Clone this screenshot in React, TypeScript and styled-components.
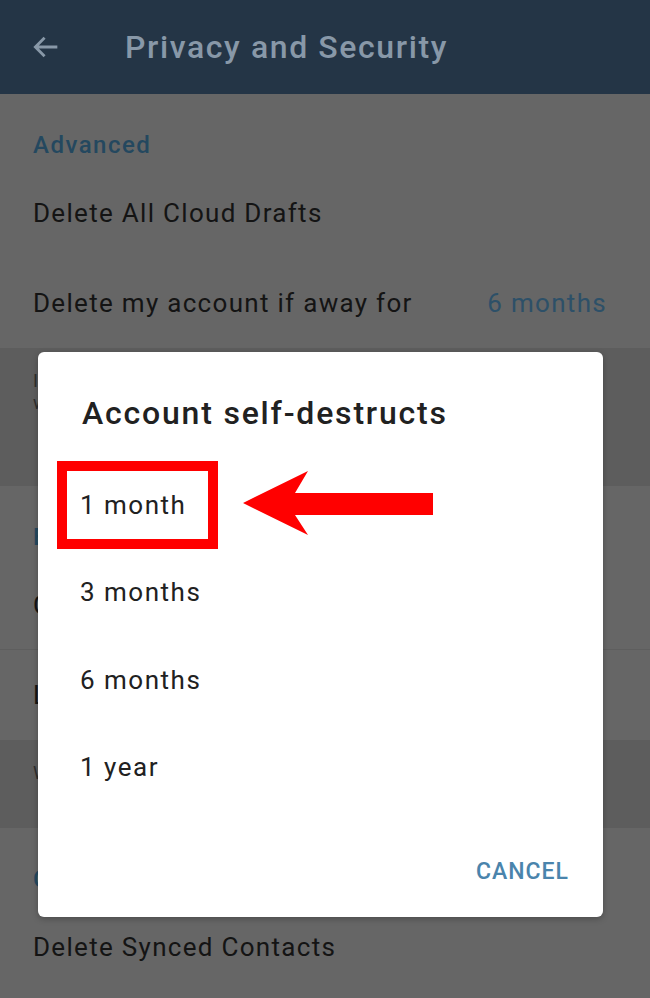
import styled, { createGlobalStyle } from "styled-components";

const GlobalStyle = createGlobalStyle`
  html, body {
    margin: 0;
    padding: 0;
    background: #666666;
  }
  * {
    box-sizing: border-box;
  }
`;

const Screen = styled.div`
  position: relative;
  width: 650px;
  height: 998px;
  overflow: hidden;
  background: #666666;
  font-family: Roboto, "Liberation Sans", sans-serif;
`;

const AppBar = styled.header`
  display: flex;
  align-items: center;
  height: 94px;
  padding-left: 29px;
  background: #243546;
`;

const BackButton = styled.div`
  display: flex;
  width: 34px;
  height: 34px;
  color: #8898a8;
`;

const AppTitle = styled.h1`
  margin: 0 0 0 62px;
  font-size: 32px;
  font-weight: 500;
  color: #8898a8;
  letter-spacing: 1.6px;
`;

const SectionHeader = styled.div`
  height: 74px;
  padding: 37px 33px 0;
  font-size: 24px;
  line-height: 28px;
  font-weight: 500;
  color: #24485f;
  letter-spacing: 1.5px;
`;

const Row = styled.div<{ $divider?: boolean }>`
  display: flex;
  align-items: center;
  justify-content: space-between;
  height: 90px;
  padding: 0 43px 0 33px;
  font-size: 26px;
  letter-spacing: 1.3px;
  color: #141414;
  border-bottom: ${(p) => (p.$divider ? "1px solid #5e5e5e" : "none")};
`;

const RowValue = styled.span`
  color: #2d5068;
`;

const InfoBand = styled.div<{ $height: number }>`
  height: ${(p) => p.$height}px;
  padding: 22px 33px 0;
  background: #5d5d5d;
  font-size: 18px;
  line-height: 22px;
  color: #2e2e2e;
`;

const Dialog = styled.div`
  position: absolute;
  left: 38px;
  top: 352px;
  width: 565px;
  height: 565px;
  display: flex;
  flex-direction: column;
  padding: 40px 34px 22px 0;
  background: #ffffff;
  border-radius: 6px;
  box-shadow: 0 2px 6px rgba(0, 0, 0, 0.25);
`;

const DialogTitle = styled.h2`
  margin: 0 0 27px 44px;
  font-size: 32px;
  line-height: 42px;
  font-weight: 500;
  letter-spacing: 1.8px;
  color: #212121;
`;

const OptionList = styled.div`
  display: flex;
  flex-direction: column;
`;

const Option = styled.div`
  display: flex;
  align-items: center;
  height: 87.5px;
  padding-left: 42px;
  font-size: 26px;
  letter-spacing: 1.5px;
  color: #212121;
`;

const Highlight = styled.span`
  display: inline-flex;
  align-items: center;
  height: 88px;
  margin-left: -23px;
  padding: 0 22px 0 13px;
  border: 10px solid #ff0000;
`;

const Pointer = styled.svg`
  flex: none;
  margin-left: 25px;
  margin-top: -4px;
`;

const DialogFooter = styled.div`
  display: flex;
  justify-content: flex-end;
  align-items: center;
  height: 48px;
  margin-top: auto;
`;

const CancelButton = styled.span`
  font-size: 23px;
  font-weight: 500;
  color: #4a84ac;
  letter-spacing: 1px;
`;

const options = ["1 month", "3 months", "6 months", "1 year"];

export default function App() {
  return (
    <Screen>
      <GlobalStyle />
      <AppBar>
        <BackButton>
          <svg width="34" height="34" viewBox="0 0 24 24" fill="none" stroke="currentColor" strokeWidth="2">
            <path d="M20 12H4.5M11 5.5L4.5 12l6.5 6.5" />
          </svg>
        </BackButton>
        <AppTitle>Privacy and Security</AppTitle>
      </AppBar>

      <SectionHeader>Advanced</SectionHeader>
      <Row>Delete All Cloud Drafts</Row>
      <Row>
        Delete my account if away for
        <RowValue>6 months</RowValue>
      </Row>
      <InfoBand $height={138}>
        If you do not come online at least once within this period, your account will be
        deleted along with all messages and contacts.
      </InfoBand>

      <SectionHeader>Bots and websites</SectionHeader>
      <Row $divider>Clear Payment and Shipping Info</Row>
      <Row>Logged In with Telegram</Row>
      <InfoBand $height={88}>Websites where you've used Telegram to log in.</InfoBand>

      <SectionHeader>Contacts</SectionHeader>
      <Row>Delete Synced Contacts</Row>

      <Dialog>
        <DialogTitle>Account self-destructs</DialogTitle>
        <OptionList>
          {options.map((label, i) =>
            i === 0 ? (
              <Option key={label}>
                <Highlight>{label}</Highlight>
                <Pointer width="190" height="64" viewBox="0 0 190 64">
                  <polygon
                    points="0,32 65,0 52,22 190,22 190,44 52,44 65,64"
                    fill="#ff0000"
                  />
                </Pointer>
              </Option>
            ) : (
              <Option key={label}>{label}</Option>
            )
          )}
        </OptionList>
        <DialogFooter>
          <CancelButton>CANCEL</CancelButton>
        </DialogFooter>
      </Dialog>
    </Screen>
  );
}
